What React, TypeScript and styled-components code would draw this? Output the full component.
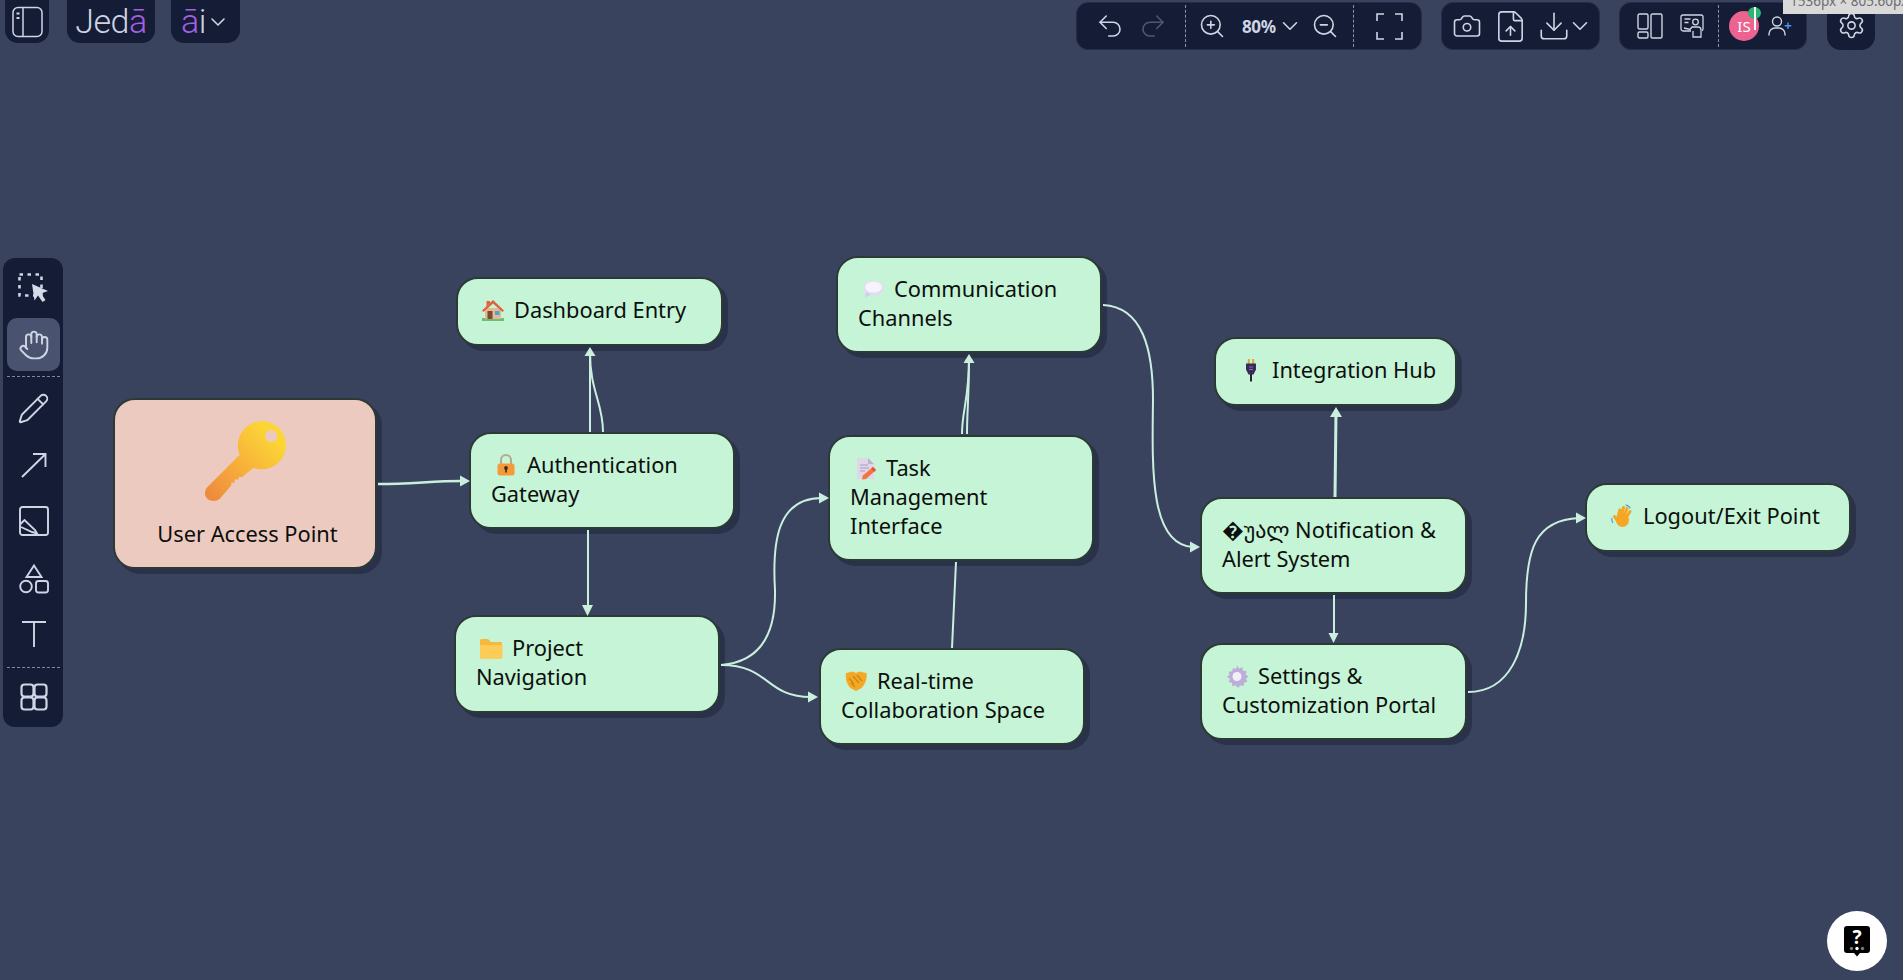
import * as React from 'react'
import styled, { createGlobalStyle } from 'styled-components'
import {
  Camera,
  ChevronDown,
  Download,
  FileUp,
  Hand,
  Pencil,
  Redo2,
  Settings,
  Undo2,
  ZoomIn,
  ZoomOut,
} from 'lucide-react'

const GlobalStyle = createGlobalStyle`
  html, body {
    margin: 0;
    padding: 0;
    height: 100%;
    background: #39435e;
  }
  * { box-sizing: border-box; }
  svg { flex: none; }
`

const Page = styled.div`
  position: relative;
  width: 100vw;
  height: 100vh;
  overflow: hidden;
  background: #39435e;
  font-family: 'Noto Sans', 'DejaVu Sans', sans-serif;
`

/*
 * top bar
 */

const TopBar = styled.header`
  position: absolute;
  top: 0;
  left: 0;
  right: 0;
  z-index: 4;
  display: flex;
  align-items: flex-start;
  padding: 0 28px 0 5px;
  color: #cfd5e4;
`

const LeftButton = styled.div<{ $w: number; $after: number }>`
  width: ${p => p.$w}px;
  height: 43px;
  margin-right: ${p => p.$after}px;
  display: flex;
  align-items: center;
  justify-content: center;
  background: #151c35;
  border-radius: 0 0 13px 13px;
`

const Logo = styled.span`
  font-family: 'Roboto', 'Liberation Sans', sans-serif;
  font-weight: 300;
  font-size: 34px;
  line-height: 43px;
  letter-spacing: -0.5px;
  color: #cdd3e3;
`

const Accent = styled.span`
  color: #a45fe3;
`

const Spacer = styled.div`
  flex: 1;
`

const Group = styled.div<{ $left?: number; $right: number }>`
  height: 48px;
  margin: 2px 0 0 ${p => p.$left ?? 0}px;
  padding-right: ${p => p.$right}px;
  display: flex;
  align-items: center;
  background: #151c35;
  border: 1px solid #252d48;
  border-radius: 12px;
`

const GearTab = styled.div`
  width: 48px;
  height: 50px;
  margin-left: 20px;
  display: flex;
  align-items: center;
  justify-content: center;
  background: #151c35;
  border-radius: 0 0 14px 14px;
`

const Slot = styled.div<{ $w: number; $dim?: boolean }>`
  width: ${p => p.$w}px;
  flex: none;
  display: flex;
  align-items: center;
  justify-content: center;
  opacity: ${p => (p.$dim ? 0.32 : 1)};
`

const VDots = styled.div<{ $l: number; $r: number }>`
  width: 0;
  height: 42px;
  margin: 0 ${p => p.$r}px 0 ${p => p.$l}px;
  border-left: 1px dashed #8a92aa;
`

const ZoomLabel = styled.div`
  width: 54px;
  margin: 0 14px 0 15px;
  display: flex;
  align-items: center;
  gap: 1px;
  font-size: 17px;
  font-weight: 700;
  letter-spacing: -0.4px;
  color: #cfd5e4;
`

const Avatar = styled.div`
  position: relative;
  width: 30px;
  height: 30px;
  flex: none;
  display: flex;
  align-items: center;
  justify-content: center;
  border-radius: 50%;
  background: #ec6391;
  color: #fff;
  font-size: 15px;
`

const Badge = styled.span`
  position: absolute;
  top: -4px;
  right: -2px;
  width: 13px;
  height: 12px;
  border-radius: 50%;
  background: #2bb673;
  &::after {
    content: '';
    position: absolute;
    left: 6px;
    top: 0;
    width: 1.5px;
    height: 23px;
    background: #f2fff8;
  }
`

const SizeHint = styled.div`
  position: absolute;
  top: 0;
  left: 1783px;
  right: 0;
  height: 14px;
  z-index: 5;
  overflow: hidden;
  padding-left: 7px;
  background: #d9d9d9;
  color: #6d6d6d;
  font-size: 13.5px;
  line-height: 14px;
  white-space: nowrap;
`

const SizeText = styled.div`
  margin-top: -6px;
`

/*
 * side tool rail
 */

const Rail = styled.nav`
  position: absolute;
  top: 258px;
  left: 3px;
  z-index: 4;
  width: 60px;
  height: 469px;
  padding-top: 12px;
  display: flex;
  flex-direction: column;
  align-items: center;
  background: #151c35;
  border-radius: 12px;
  color: #cfd5e4;
`

const Tool = styled.div<{ $h: number; $active?: boolean; $lift?: number }>`
  width: 53px;
  height: ${p => p.$h}px;
  flex: none;
  padding: 0 0 ${p => p.$lift ?? 0}px 1px;
  display: flex;
  align-items: center;
  justify-content: center;
  border-radius: 10px;
  background: ${p => (p.$active ? '#49536f' : 'transparent')};
`

const HDots = styled.div<{ $top: number }>`
  width: 53px;
  height: 0;
  flex: none;
  margin-top: ${p => p.$top}px;
  border-top: 1px dashed #7f88a2;
`

/*
 * canvas
 */

const Wires = styled.svg`
  position: absolute;
  inset: 0;
  width: 100%;
  height: 100%;
  z-index: 3;
`

const Node = styled.div<{ $x: number; $y: number; $w: number; $h: number; $start?: boolean }>`
  position: absolute;
  z-index: 2;
  left: ${p => p.$x}px;
  top: ${p => p.$y}px;
  width: ${p => p.$w}px;
  height: ${p => p.$h}px;
  padding: ${p => (p.$start ? '0 0 0 5px' : '0 0 4px 20px')};
  display: flex;
  flex-direction: ${p => (p.$start ? 'column' : 'row')};
  align-items: center;
  background: ${p => (p.$start ? '#eccabf' : '#c6f4d6')};
  border: 2px solid #2b3a35;
  border-radius: 22px;
  box-shadow: 5px 5px 0 #2a324a;
  color: #0c0f0d;
  font-size: 21.8px;
  line-height: 29px;
  white-space: nowrap;
`

const KeyWrap = styled.svg`
  width: 84px;
  height: 84px;
  margin: 20px 0 0 -6px;
  flex: none;
`

const StartLabel = styled.div`
  margin-top: 15px;
`

const EmojiSvg = styled.svg`
  display: inline-block;
  width: 24px;
  height: 24px;
  margin: 0 9px 0 3px;
  vertical-align: -4px;
`

const HelpButton = styled.div`
  position: absolute;
  left: 1827px;
  top: 911px;
  z-index: 4;
  width: 60px;
  height: 60px;
  display: flex;
  align-items: center;
  justify-content: center;
  border-radius: 50%;
  background: #fff;
`

/*
 * drawings that the icon packages do not have
 */

const PanelIcon = () => (
  <svg width="31" height="32" viewBox="0 0 31 32" fill="none" stroke="#cfd5e4" strokeWidth="1.5">
    <rect x="1" y="1.5" width="29" height="29" rx="5" />
    <path d="M11 1.5v29" />
    <path d="M4.5 7.5h3M4.5 12h3" strokeWidth="2" />
  </svg>
)

const FullscreenIcon = () => (
  <svg width="27" height="27" viewBox="0 0 27 27" fill="none" stroke="#cfd5e4" strokeWidth="1.6">
    <path d="M8 1H1v7M19 1h7v7M8 26H1v-7M19 26h7v-7" />
  </svg>
)

const BoardsIcon = () => (
  <svg width="26" height="26" viewBox="0 0 26 26" fill="none" stroke="#cfd5e4" strokeWidth="1.4">
    <rect x="1" y="1" width="10" height="15" rx="1.5" />
    <rect x="1" y="19" width="10" height="6" rx="1.5" />
    <rect x="14" y="1" width="11" height="24" rx="1.5" />
  </svg>
)

const PresenterIcon = () => (
  <svg width="24" height="24" viewBox="0 0 24 24" fill="none" stroke="#cfd5e4" strokeWidth="1.3">
    <path d="M11 17H3a2 2 0 0 1-2-2V3a2 2 0 0 1 2-2h18a2 2 0 0 1 2 2v12a2 2 0 0 1-1 1.7" />
    <path d="M4.5 5h6M4.5 8.5h4" />
    <circle cx="15.5" cy="8" r="2.8" />
    <path d="M4 14l6 1.5 2-2.5h6a3 3 0 0 1 3 3v7h-8v-6" />
  </svg>
)

const AddUserIcon = () => (
  <svg width="25" height="20" viewBox="0 0 25 20" fill="none" strokeWidth="1.4">
    <circle cx="9" cy="5.5" r="4.5" stroke="#cfd5e4" />
    <path d="M1 19.5V18a6 6 0 0 1 6-6h4a6 6 0 0 1 6 6v1.5" stroke="#cfd5e4" />
    <path d="M20 6.5V13M16.8 9.8h6.5" stroke="#4f9be8" />
  </svg>
)

const SelectIcon = () => (
  <svg width="31" height="31" viewBox="0 0 31 31" fill="none">
    <rect x="1.5" y="1.5" width="22" height="21" stroke="#cfd5e4" strokeWidth="2.6" strokeDasharray="3.5 4.5" />
    <path d="M14 11l16 7-7 2.5 4.5 6.5-3 2-4.5-6.5-3.5 5z" fill="#d5dbe8" />
  </svg>
)

const ArrowIcon = () => (
  <svg width="26" height="26" viewBox="0 0 26 26" fill="none" stroke="#cfd5e4" strokeWidth="1.9">
    <path d="M1 25L24.5 2M12 2h12.5v13" />
  </svg>
)

const FrameIcon = () => (
  <svg width="30" height="30" viewBox="0 0 30 30" fill="none" stroke="#cfd5e4" strokeWidth="1.9">
    <rect x="1" y="1" width="28" height="28" rx="2.5" />
    <path d="M1.5 18l4-4L16 24l2 3.5-5-1.500L2 21" />
  </svg>
)

const ShapesIcon = () => (
  <svg width="30" height="30" viewBox="0 0 30 30" fill="none" stroke="#cfd5e4" strokeWidth="1.9">
    <path d="M15 1.5L22.5 13h-15z" />
    <circle cx="7" cy="22.5" r="5.8" />
    <rect x="17" y="17" width="12" height="11.5" rx="2.5" />
  </svg>
)

const TextIcon = () => (
  <svg width="26" height="27" viewBox="0 0 26 27" fill="none" stroke="#cfd5e4" strokeWidth="1.9">
    <path d="M1 2h24M13 2v25" />
  </svg>
)

const GridIcon = () => (
  <svg width="28" height="28" viewBox="0 0 28 28" fill="none" stroke="#cfd5e4" strokeWidth="2.2">
    <rect x="1.5" y="1.5" width="12" height="12" rx="3" />
    <rect x="14.5" y="1.5" width="12" height="12" rx="3" />
    <rect x="1.5" y="14.5" width="12" height="12" rx="3" />
    <rect x="14.5" y="14.5" width="12" height="12" rx="3" />
  </svg>
)

const HelpIcon = () => (
  <svg width="26" height="31" viewBox="0 0 26 31">
    <path d="M3 0h20a3 3 0 0 1 3 3v21a3 3 0 0 1-3 3h-7l-3 3.5-3-3.5H3a3 3 0 0 1-3-3V3a3 3 0 0 1 3-3z" fill="#000" />
    <text x="13" y="18" textAnchor="middle" fontFamily="'Noto Sans', sans-serif" fontWeight="700" fontSize="19" fill="#fff">
      ?
    </text>
    <circle cx="7.5" cy="22.5" r="1.7" fill="#777" />
    <circle cx="13" cy="22.5" r="1.7" fill="#fff" />
    <circle cx="18.5" cy="22.5" r="1.7" fill="#777" />
  </svg>
)

const KeyEmoji = () => (
  <KeyWrap viewBox="0 0 80 80">
    <defs>
      <linearGradient id="keyFill" gradientUnits="userSpaceOnUse" x1="8" y1="72" x2="66" y2="14">
        <stop offset="0" stopColor="#ee8c3e" />
        <stop offset="0.5" stopColor="#f8b13a" />
        <stop offset="1" stopColor="#fbd636" />
      </linearGradient>
    </defs>
    <path
      fillRule="evenodd"
      fill="url(#keyFill)"
      d="M56 1a23 23 0 0 1 0 46c-3 0-6-.6-8-1.5l-11 9-2.5-.5-1 3-3-.5-.8 3.5-2.5-.5-.5 3L16 75c-3.5 3-8.5 2.500-11.500.5-3.500-3-3.500-8.500 0-12L35 33c-1.2-3-1.800-5.500-1.800-9A23 23 0 0 1 56 1zm9 8.500a5.800 5.800 0 1 0 0 11.600 5.800 5.800 0 0 0 0-11.600z"
    />
  </KeyWrap>
)

type EmojiKind = 'house' | 'lock' | 'speech' | 'memo' | 'folder' | 'shake' | 'plug' | 'gear' | 'wave'

const emojiShapes: Record<EmojiKind, React.ReactNode> = {
  house: (
    <>
      <rect x="1" y="20" width="22" height="3" fill="#6fbf73" />
      <rect x="4" y="10" width="16" height="11" fill="#e6b98f" />
      <path d="M12 2L1 12.5 2.500 14 12 5.500 21.500 14l1.500-1.500z" fill="#e2603f" />
      <path d="M12 2L9 5V3H5.500v5.500z" fill="#e2603f" />
      <rect x="6.5" y="13" width="5" height="8" fill="#7a4a32" />
      <rect x="14" y="13" width="4.5" height="4" fill="#4aa3df" />
    </>
  ),
  lock: (
    <>
      <path d="M7 11V7a5 5 0 0 1 10 0v4" fill="none" stroke="#b8a98a" strokeWidth="2" />
      <rect x="3.5" y="10.5" width="17" height="12" rx="2.5" fill="#f59a3a" />
      <circle cx="12" cy="15" r="1.9" fill="#3a2a1c" />
      <rect x="11.2" y="15" width="1.6" height="4.5" fill="#3a2a1c" />
    </>
  ),
  speech: (
    <>
      <ellipse cx="12.5" cy="11" rx="10.5" ry="7.5" fill="#e2dcf2" />
      <path d="M5 15l-1 6 6-3.500z" fill="#d4cdea" />
      <ellipse cx="12.5" cy="10" rx="8.5" ry="5.5" fill="#f6f3fc" />
    </>
  ),
  memo: (
    <>
      <path d="M4 2h11l6 6v15H4z" fill="#e0d6ea" />
      <path d="M15 2l6 6h-6z" fill="#bfb2cf" />
      <path d="M7 9h8M7 12h9M7 15h5" stroke="#a89bb8" strokeWidth="1.1" />
      <path d="M20 11l3 3-10 9-4 .5.800-4z" fill="#f0763c" />
      <path d="M20 11l3 3-1.800 1.700-3-3z" fill="#e84a4a" />
    </>
  ),
  folder: (
    <>
      <path d="M1 4.5A1.500 1.500 0 0 1 2.500 3H9l3 3h10a1.500 1.500 0 0 1 1 1.500V21a1.500 1.500 0 0 1-1.500 1.500h-19A1.500 1.500 0 0 1 1 21z" fill="#f6b93b" />
      <path d="M1 9h22.500v12a1.500 1.500 0 0 1-1.500 1.500H2.500A1.500 1.500 0 0 1 1 21z" fill="#fdcb58" />
    </>
  ),
  shake: (
    <>
      <path d="M2 4l7-1.500L12 4l3-1.500L22.500 4c.8 5-1 11-5 15L12 22l-5.500-3C2.500 15 1.200 9 2 4z" fill="#f4a926" />
      <path d="M5 9l5 6M9 7l6 7M13 6l5 6M7 14l4 4" stroke="#cf8414" strokeWidth="1.2" />
    </>
  ),
  plug: (
    <>
      <rect x="8.8" y="1" width="2" height="5" fill="#d9a441" />
      <rect x="13.2" y="1" width="2" height="5" fill="#d9a441" />
      <path d="M7 5.5h10v6l-2.500 5h-5L7 11.500z" fill="#3a2a55" />
      <path d="M10 9h4M10 11.500h4" stroke="#8d67c9" strokeWidth="1" />
      <rect x="11" y="16" width="2" height="7.5" fill="#2a2238" />
    </>
  ),
  gear: (
    <>
      <path
        d="M12 1.5l2 3 3.300-1.200.7 3.400 3.500.4-.8 3.400 2.800 1.900-2.500 2.400 1.400 3.200-3.400.8-.3 3.500-3.300-1-2.400 2.600-2.400-2.600-3.300 1-.3-3.500-3.400-.8 1.400-3.200L1.700 13l2.800-1.900-.8-3.400 3.500-.4.700-3.400L11 5.100z"
        fill="#bcaed8"
      />
      <circle cx="12" cy="12.5" r="4.5" fill="#f2eefa" />
    </>
  ),
  wave: (
    <>
      <path d="M2 14c-.5 2 0 3.500 1 5M15.500 1c2.200.2 3.800 1.300 4.800 3.300" fill="none" stroke="#4b9fd5" strokeWidth="1.2" />
      <ellipse cx="12.5" cy="16" rx="6.5" ry="7" fill="#f5a623" />
      <path d="M8 13L9.800 6M11 12l2.500-8.500M14 12l3-7.500M16.500 13l3.500-5.500M7.500 17L4.500 12.500" stroke="#f5a623" strokeWidth="3" strokeLinecap="round" />
    </>
  ),
}

const Emoji = ({ kind }: { kind: EmojiKind }) => <EmojiSvg viewBox="0 0 24 24">{emojiShapes[kind]}</EmojiSvg>

/*
 * diagram data
 */

const nodes: { x: number; y: number; w: number; h: number; kind: EmojiKind; lines: string[] }[] = [
  { x: 456, y: 277, w: 267, h: 69, kind: 'house', lines: ['Dashboard Entry'] },
  { x: 469, y: 432, w: 266, h: 97, kind: 'lock', lines: ['Authentication', 'Gateway'] },
  { x: 454, y: 615, w: 266, h: 98, kind: 'folder', lines: ['Project', 'Navigation'] },
  { x: 836, y: 256, w: 266, h: 97, kind: 'speech', lines: ['Communication', 'Channels'] },
  { x: 828, y: 435, w: 266, h: 126, kind: 'memo', lines: ['Task', 'Management', 'Interface'] },
  { x: 819, y: 648, w: 266, h: 97, kind: 'shake', lines: ['Real-time', 'Collaboration Space'] },
  { x: 1214, y: 337, w: 243, h: 69, kind: 'plug', lines: ['Integration Hub'] },
  { x: 1200, y: 643, w: 267, h: 97, kind: 'gear', lines: ['Settings &', 'Customization Portal'] },
  { x: 1585, y: 483, w: 266, h: 69, kind: 'wave', lines: ['Logout/Exit Point'] },
]

const wires = [
  { d: 'M378 484C412 484 432 481 462 481', w: 2.4 },
  { d: 'M590 432V352', w: 2 },
  { d: 'M603 432C603 402 590 392 590 352', w: 2 },
  { d: 'M588 530V608', w: 2 },
  { d: 'M721 665C760 662 776 635 775 590C772 540 778 498 822 498', w: 2 },
  { d: 'M721 665C770 665 765 697 811 697', w: 2 },
  { d: 'M952 648L956 562', w: 2 },
  { d: 'M962 434C962 410 969 400 969 358', w: 2 },
  { d: 'M967 434C967 410 969 400 969 358', w: 2 },
  { d: 'M1103 305C1143 307 1153 350 1153 400C1152 470 1150 545 1193 547', w: 2 },
  { d: 'M1335 497L1336 412', w: 3 },
  { d: 'M1334 595V636', w: 2 },
  { d: 'M1468 692C1510 692 1526 650 1526 603C1526 550 1535 520 1579 518', w: 2 },
]

const heads = [
  '470,481 460,475.5 460,486.5',
  '590,347 584.5,356 595.5,356',
  '587.5,616 582,605 593,605',
  '829,498 819,492.5 819,503.5',
  '818,697 808,691.5 808,702.5',
  '969,354 963.5,363 974.5,363',
  '1200,547 1190,541.5 1190,552.5',
  '1336,407 1330,417 1342,417',
  '1333.5,643 1328.5,633 1338.5,633',
  '1586,518 1576,512.5 1576,523.5',
]

const WIRE = '#cbefdf'
const iconProps = { strokeWidth: 1.6, absoluteStrokeWidth: true }
const railProps = { strokeWidth: 1.9, absoluteStrokeWidth: true }

export default function App() {
  return (
    <Page>
      <GlobalStyle />

      <TopBar>
        <LeftButton $w={44} $after={18}>
          <PanelIcon />
        </LeftButton>
        <LeftButton $w={88} $after={16}>
          <Logo>
            Jed<Accent>ā</Accent>
          </Logo>
        </LeftButton>
        <LeftButton $w={69} $after={0}>
          <Logo>
            <Accent>ā</Accent>i
          </Logo>
          <ChevronDown size={24} {...iconProps} />
        </LeftButton>

        <Spacer />

        <Group $right={15}>
          <Slot $w={11} />
          <Slot $w={44}>
            <Undo2 size={30} {...iconProps} />
          </Slot>
          <Slot $w={42} $dim>
            <Redo2 size={30} {...iconProps} />
          </Slot>
          <VDots $l={11} $r={11} />
          <Slot $w={30}>
            <ZoomIn size={28} {...iconProps} />
          </Slot>
          <ZoomLabel>
            80%
            <ChevronDown size={26} {...iconProps} />
          </ZoomLabel>
          <Slot $w={30}>
            <ZoomOut size={28} {...iconProps} />
          </Slot>
          <VDots $l={13} $r={18} />
          <Slot $w={34}>
            <FullscreenIcon />
          </Slot>
        </Group>

        <Group $left={19} $right={12}>
          <Slot $w={7} />
          <Slot $w={36}>
            <Camera size={30} {...iconProps} />
          </Slot>
          <Slot $w={50}>
            <FileUp size={35} {...iconProps} />
          </Slot>
          <Slot $w={38}>
            <Download size={34} {...iconProps} />
          </Slot>
          <Slot $w={14}>
            <ChevronDown size={26} {...iconProps} />
          </Slot>
        </Group>

        <Group $left={19} $right={5}>
          <Slot $w={10} />
          <Slot $w={40}>
            <BoardsIcon />
          </Slot>
          <Slot $w={44}>
            <PresenterIcon />
          </Slot>
          <VDots $l={4} $r={10} />
          <Avatar>
            IS
            <Badge />
          </Avatar>
          <Slot $w={42}>
            <AddUserIcon />
          </Slot>
        </Group>

        <GearTab>
          <Settings size={29} {...iconProps} />
        </GearTab>
      </TopBar>

      <SizeHint>
        <SizeText>1536px × 805.60px</SizeText>
      </SizeHint>

      <Rail>
        <Tool $h={48} $lift={12}>
          <SelectIcon />
        </Tool>
        <Tool $h={53} $active>
          <Hand size={32} {...railProps} />
        </Tool>
        <HDots $top={5} />
        <Tool $h={62}>
          <Pencil size={33} {...railProps} />
        </Tool>
        <Tool $h={54} $lift={3}>
          <ArrowIcon />
        </Tool>
        <Tool $h={56}>
          <FrameIcon />
        </Tool>
        <Tool $h={60}>
          <ShapesIcon />
        </Tool>
        <Tool $h={52} $lift={4}>
          <TextIcon />
        </Tool>
        <HDots $top={6} />
        <Tool $h={60} $lift={2}>
          <GridIcon />
        </Tool>
      </Rail>

      <Wires viewBox="0 0 1903 980" fill="none">
        {wires.map(wire => (
          <path key={wire.d} d={wire.d} stroke={WIRE} strokeWidth={wire.w} />
        ))}
        {heads.map(points => (
          <polygon key={points} points={points} fill={WIRE} />
        ))}
      </Wires>

      <Node $x={113} $y={398} $w={264} $h={171} $start>
        <KeyEmoji />
        <StartLabel>User Access Point</StartLabel>
      </Node>

      {nodes.map(node => (
        <Node key={node.lines[0]} $x={node.x} $y={node.y} $w={node.w} $h={node.h}>
          <div>
            <Emoji kind={node.kind} />
            {node.lines.map((line, i) => (
              <React.Fragment key={line}>
                {i > 0 && <br />}
                {line}
              </React.Fragment>
            ))}
          </div>
        </Node>
      ))}

      <Node $x={1200} $y={497} $w={267} $h={97}>
        <div>
          �უალ Notification &amp;
          <br />
          Alert System
        </div>
      </Node>

      <HelpButton>
        <HelpIcon />
      </HelpButton>
    </Page>
  )
}
